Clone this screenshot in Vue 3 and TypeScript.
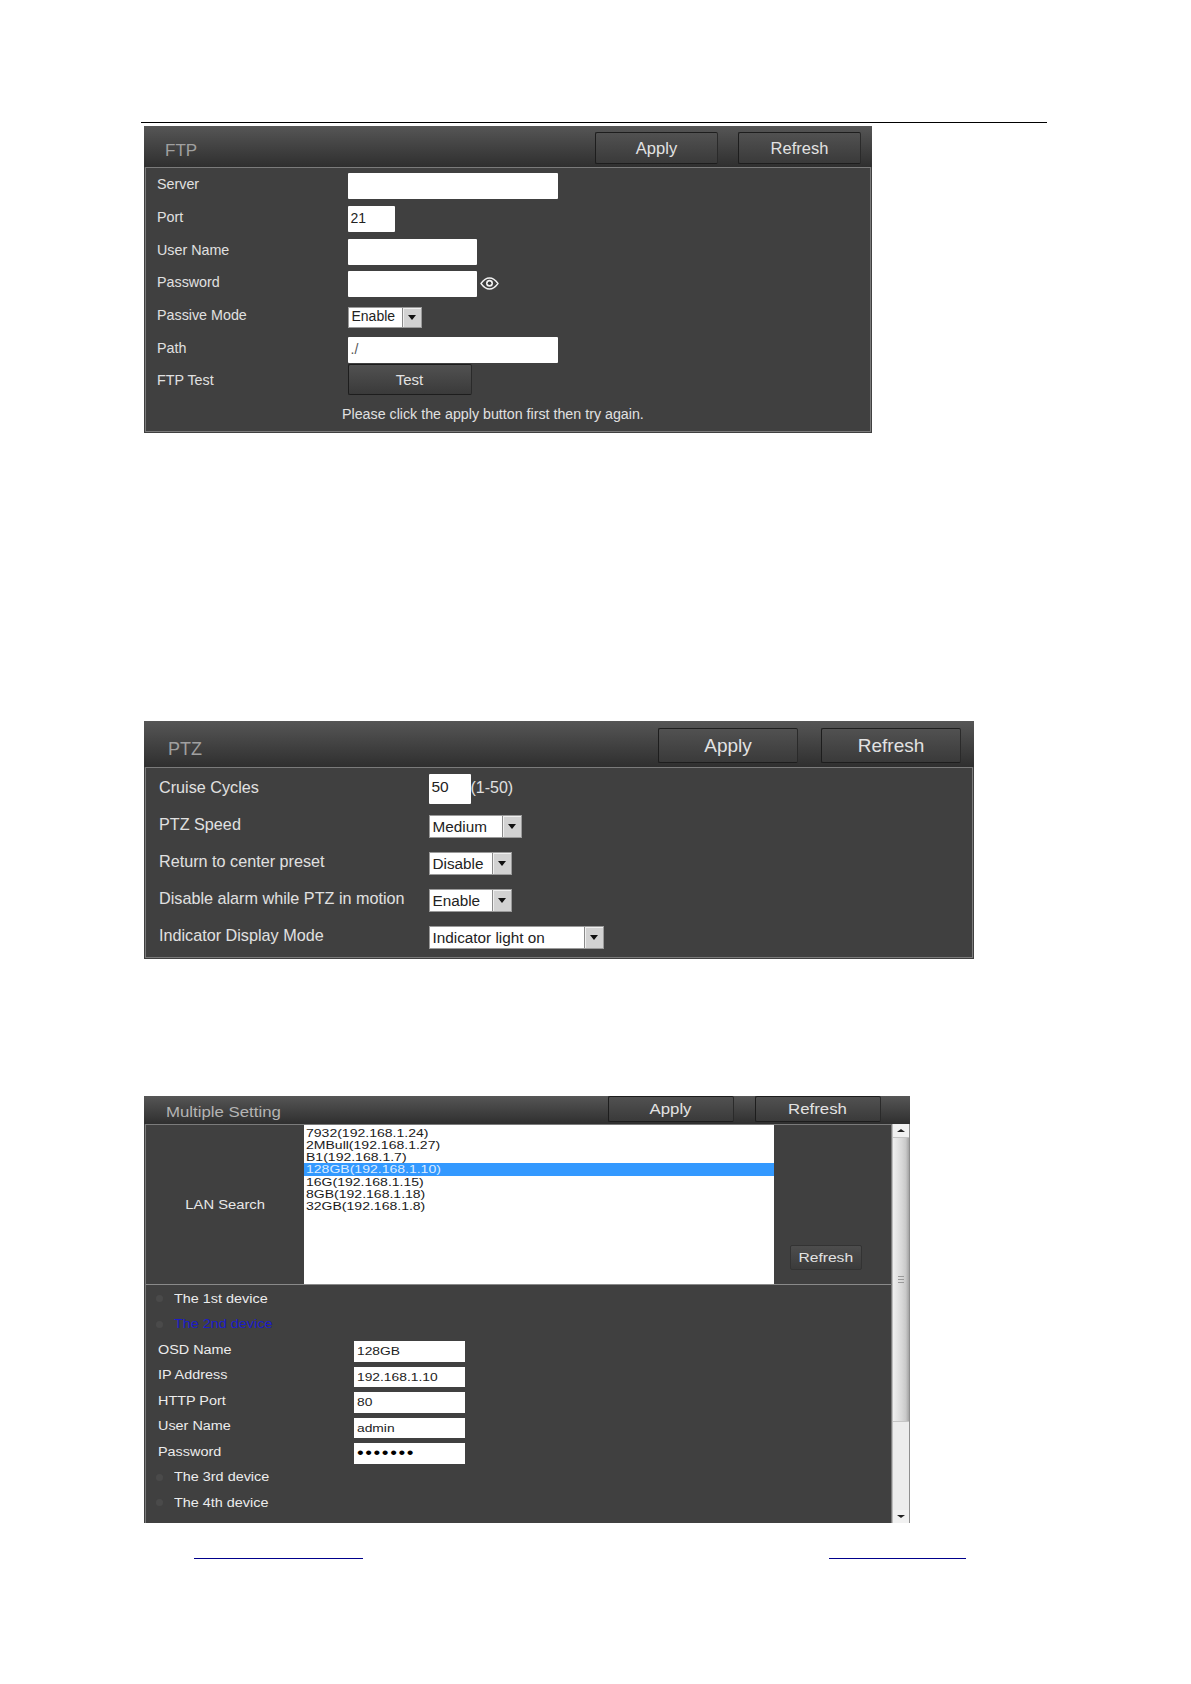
<script setup lang="ts">
const lanDevices: string[] = [
  '7932(192.168.1.24)',
  '2MBull(192.168.1.27)',
  'B1(192.168.1.7)',
  '128GB(192.168.1.10)',
  '16G(192.168.1.15)',
  '8GB(192.168.1.18)',
  '32GB(192.168.1.8)',
]
const deviceFields = [
  { label: 'OSD Name', value: '128GB' },
  { label: 'IP Address', value: '192.168.1.10' },
  { label: 'HTTP Port', value: '80' },
  { label: 'User Name', value: 'admin' },
  { label: 'Password', value: '•••••••', secret: true },
]
const ptzSelects = [
  { label: 'PTZ Speed', value: 'Medium', cls: 'w-medium' },
  { label: 'Return to center preset', value: 'Disable', cls: 'w-short' },
  { label: 'Disable alarm while PTZ in motion', value: 'Enable', cls: 'w-short' },
  { label: 'Indicator Display Mode', value: 'Indicator light on', cls: 'w-long' },
]
</script>

<template>
  <div class="page">
    <div class="rule"></div>

    <section class="panel ftp">
      <header class="head">
        <h2 class="title">FTP</h2>
        <div class="head-btns">
          <button class="btn">Apply</button>
          <button class="btn">Refresh</button>
        </div>
      </header>
      <div class="body">
        <div class="row"><span class="label">Server</span><div class="field wide"></div></div>
        <div class="row"><span class="label">Port</span><div class="field port">21</div></div>
        <div class="row"><span class="label">User Name</span><div class="field mid"></div></div>
        <div class="row">
          <span class="label">Password</span>
          <div class="field mid"></div>
          <svg class="eye" width="19" height="13" viewBox="0 0 19 13" fill="none">
            <path d="M1 6.5C4 2.3 6.6 1 9.500 1S15 2.300 18 6.500C15 10.700 12.400 12 9.500 12S4 10.700 1 6.500Z" stroke="#f2f2f2" stroke-width="1.300" />
            <circle cx="9.500" cy="6.300" r="3.500" fill="#f2f2f2" />
            <circle cx="9.500" cy="6.300" r="1.800" fill="#3a3a3a" />
          </svg>
        </div>
        <div class="row">
          <span class="label">Passive Mode</span>
          <div class="select ftp-select"><span class="sel-text">Enable</span><span class="sel-arrow"><i></i></span></div>
        </div>
        <div class="row"><span class="label">Path</span><div class="field wide path">./</div></div>
        <div class="row test-row"><span class="label">FTP Test</span><button class="btn test">Test</button></div>
        <p class="note">Please click the apply button first then try again.</p>
      </div>
    </section>

    <section class="panel ptz">
      <header class="head">
        <h2 class="title">PTZ</h2>
        <div class="head-btns">
          <button class="btn">Apply</button>
          <button class="btn">Refresh</button>
        </div>
      </header>
      <div class="body">
        <div class="row">
          <span class="label">Cruise Cycles</span>
          <div class="field cycles">50</div><span class="hint">(1-50)</span>
        </div>
        <div v-for="s in ptzSelects" :key="s.label" class="row">
          <span class="label">{{ s.label }}</span>
          <div class="select" :class="s.cls"><span class="sel-text">{{ s.value }}</span><span class="sel-arrow"><i></i></span></div>
        </div>
      </div>
    </section>

    <section class="panel multi">
      <header class="head">
        <h2 class="title"><span class="wx">Multiple Setting</span></h2>
        <div class="head-btns">
          <button class="btn"><span class="wx mid-origin">Apply</span></button>
          <button class="btn"><span class="wx mid-origin">Refresh</span></button>
        </div>
      </header>
      <div class="content">
        <div class="main">
          <div class="lan">
            <div class="lan-label"><span class="wx mid-origin">LAN Search</span></div>
            <ul class="lan-list">
              <li v-for="(d, i) in lanDevices" :key="d" :class="{ sel: i === 3 }"><span class="wx">{{ d }}</span></li>
            </ul>
            <div class="lan-side"><button class="btn small"><span class="wx mid-origin">Refresh</span></button></div>
          </div>
          <div class="devices">
            <div class="dev"><i class="dot"></i><span class="wx">The 1st device</span></div>
            <div class="dev active"><i class="dot"></i><span class="wx">The 2nd device</span></div>
            <div v-for="f in deviceFields" :key="f.label" class="dev-row">
              <span class="dev-label"><span class="wx">{{ f.label }}</span></span>
              <div class="dev-field" :class="{ secret: f.secret }"><span class="wx">{{ f.value }}</span></div>
            </div>
            <div class="dev"><i class="dot"></i><span class="wx">The 3rd device</span></div>
            <div class="dev"><i class="dot"></i><span class="wx">The 4th device</span></div>
          </div>
        </div>
        <div class="scrollbar">
          <div class="sb-btn"><i class="up"></i></div>
          <div class="sb-thumb"><span class="grip"></span></div>
          <div class="sb-track"></div>
          <div class="sb-btn"><i class="down"></i></div>
        </div>
      </div>
    </section>

    <footer class="links">
      <span class="link first"></span>
      <span class="link second"></span>
    </footer>
  </div>
</template>

<style>
body { background: #fff; }
</style>

<style scoped>
.page {
  width: 1191px;
  height: 1684px;
  padding-top: 122px;
  box-sizing: border-box;
  background: #fff;
  font-family: "Liberation Sans", Arial, sans-serif;
  overflow: hidden;
}
.rule {
  width: 906px;
  height: 1px;
  margin-left: 141px;
  background: #000;
}
.panel {
  margin-left: 144px;
  background: #404040;
  box-sizing: border-box;
}
.head {
  display: flex;
  align-items: flex-start;
  justify-content: space-between;
  box-sizing: border-box;
  background: linear-gradient(#565656, #484848 35%, #2f2f2f);
}
.title {
  margin: 0;
  font-weight: 400;
  color: #a0a0a0;
}
.head-btns { display: flex; }
.btn {
  display: block;
  padding: 0;
  box-sizing: border-box;
  font-family: inherit;
  color: #e2e2e2;
  background: linear-gradient(#515151, #3a3a3a);
  border: 1px solid #1d1d1d;
  border-right-color: #2a2a2a;
  border-radius: 2px;
}
.body {
  box-sizing: border-box;
  margin: 0 1px 1px;
  border: 1px solid #7b7b7b;
  background: #404040;
}
.row { display: flex; align-items: center; }
.label { color: #e0e0e0; }
.field {
  box-sizing: border-box;
  background: #fff;
  color: #222;
  border-radius: 1px;
}
.select {
  display: flex;
  box-sizing: border-box;
  background: #fff;
  border: 1px solid #9a9a9a;
  color: #222;
}
.sel-text { flex: 1; white-space: nowrap; }
.sel-arrow {
  display: flex;
  align-items: center;
  justify-content: center;
  width: 18px;
  background: #d2d2d2;
  border-left: 1px solid #8a8a8a;
  box-shadow: inset 1px 1px 0 #f0f0f0;
}
.sel-arrow i {
  width: 0;
  height: 0;
  border-left: 4px solid transparent;
  border-right: 4px solid transparent;
  border-top: 5px solid #111;
}

/* FTP */
.ftp { width: 728px; height: 307px; margin-top: 3px; }
.ftp .head { height: 41px; padding: 6px 11px 0 21px; }
.ftp .title { font-size: 17px; line-height: 38px; }
.ftp .head-btns { gap: 20px; }
.ftp .btn { width: 123px; height: 32px; font-size: 16.500px; }
.ftp .body { height: 265px; padding: 2px 0 0 11px; }
.ftp .row { height: 32.7px; }
.ftp .label {
  width: 190.500px;
  margin-bottom: 4px;
  font-size: 14.300px;
}
.ftp .field { height: 26px; font-size: 14px; line-height: 24px; padding-left: 3px; }
.wide { width: 210px; }
.mid { width: 129px; }
.port { width: 47px; }
.path { color: #555; }
.eye { margin: 0 0 2px 3px; }
.ftp-select { width: 74px; height: 21px; font-size: 14px; line-height: 17px; }
.ftp-select .sel-text { padding-left: 3px; }
.ftp .test-row { height: 29px; margin-top: -1px; }
.ftp .test-row .label { margin-bottom: 0; }
.ftp .btn.test { width: 124px; height: 31px; font-size: 15px; }
.note {
  margin: 4px 0 0 185px;
  font-size: 14.250px;
  line-height: 32px;
  color: #e0e0e0;
}

/* PTZ */
.ptz { width: 830px; height: 238px; margin-top: 288px; }
.ptz .head { height: 46px; padding: 7px 13px 0 24px; }
.ptz .title { font-size: 18px; line-height: 42px; }
.ptz .head-btns { gap: 23px; }
.ptz .btn { width: 140px; height: 35px; font-size: 19px; }
.ptz .body { height: 191px; padding: 2px 0 0 13px; }
.ptz .row { height: 37px; }
.ptz .label {
  width: 269.500px;
  margin-bottom: 3px;
  font-size: 16.200px;
  white-space: nowrap;
}
.cycles {
  width: 42px;
  height: 30px;
  padding-left: 3px;
  font-size: 15.500px;
  line-height: 26px;
}
.hint { margin-bottom: 1px; font-size: 16px; color: #e0e0e0; }
.ptz .select { height: 23px; font-size: 15.300px; line-height: 22px; margin-top: 1px; }
.ptz .sel-text { padding-left: 3px; }
.w-medium { width: 93px; }
.w-short { width: 83px; }
.w-long { width: 175px; }

/* Multiple setting: the text in this panel is horizontally stretched */
.wx {
  display: inline-block;
  white-space: nowrap;
  transform: scaleX(1.2);
  transform-origin: left center;
}
.wx.mid-origin { transform-origin: center; }
.multi { width: 766px; height: 427px; margin-top: 137px; }
.multi .head { height: 28px; padding: 0 29px 0 22px; }
.multi .title { font-size: 14px; line-height: 32px; color: #b4b4b4; }
.multi .head-btns { gap: 21px; }
.multi .btn {
  width: 126px;
  height: 26px;
  font-size: 14px;
}
.content { display: flex; height: 399px; }
.main {
  width: 747px;
  box-sizing: border-box;
  border-left: 1px solid #7b7b7b;
  margin-left: 1px;
  border-right: 1px solid #7b7b7b;
  border-top: 1px solid #7b7b7b;
}
.lan {
  display: flex;
  height: 159px;
  border-bottom: 1px solid #8a8a8a;
}
.lan-label {
  width: 158px;
  box-sizing: border-box;
  padding-top: 72px;
  text-align: center;
  font-size: 12.300px;
  line-height: 16px;
  color: #e8e8e8;
}
.lan-list {
  width: 470px;
  margin: 0;
  padding: 1.500px 0 0;
  list-style: none;
  background: #fff;
  color: #1a1a1a;
  font-size: 11.700px;
  line-height: 12.200px;
}
.lan-list li { height: 12.200px; padding-left: 2px; white-space: nowrap; }
.lan-list li.sel {
  background: #3399ff;
  color: #dcecff;
  height: 12.900px;
}
.lan-side {
  flex: 1;
  display: flex;
  align-items: flex-end;
  padding: 0 0 14px 16px;
}
.multi .btn.small {
  width: 72px;
  height: 25px;
  font-size: 13px;
  border-color: #333;
  background: linear-gradient(#4d4d4d, #3b3b3b);
}
.devices { padding-top: 1px; }
.dev, .dev-row {
  display: flex;
  align-items: center;
  height: 25.500px;
  font-size: 12px;
  color: #ececec;
}
.dev { padding-left: 10px; }
.dev.active { color: #1c1cc8; }
.dot {
  width: 7px;
  height: 7px;
  margin-right: 11px;
  border-radius: 50%;
  background: #4a4a4a;
}
.dev-row { padding-left: 12px; }
.dev-label { width: 196px; }
.dev-field {
  width: 111px;
  height: 20.500px;
  margin-top: 3px;
  box-sizing: border-box;
  padding-left: 3px;
  background: #fff;
  color: #222;
  font-size: 11.500px;
  line-height: 20px;
}
.dev-field.secret { color: #000; font-size: 16px; letter-spacing: 1.300px; }
.scrollbar {
  flex: 1;
  display: flex;
  flex-direction: column;
  background: #ececec;
  border-left: 1px solid #bdbdbd;
  border-right: 1px solid #8f8f8f;
}
.sb-btn {
  display: flex;
  align-items: center;
  justify-content: center;
  height: 13px;
  background: #f1f1f1;
}
.sb-btn i { width: 0; height: 0; border-left: 4px solid transparent; border-right: 4px solid transparent; }
.sb-btn .up { border-bottom: 3px solid #222; }
.sb-btn .down { border-top: 3px solid #222; }
.sb-thumb {
  display: flex;
  align-items: center;
  justify-content: center;
  height: 285px;
  background: linear-gradient(90deg, #efefef, #d8d8d8 55%, #c9c9c9 80%, #a4a4a4);
  border-top: 1px solid #c4c4c4;
  border-bottom: 1px solid #c4c4c4;
  box-sizing: border-box;
}
.grip {
  width: 6px;
  height: 5px;
  border-top: 1px solid #999;
  border-bottom: 1px solid #999;
  background: linear-gradient(#999, #999) center / 100% 1px no-repeat;
}
.sb-track { flex: 1; }

.links { display: flex; margin-top: 35px; }
.link { display: block; height: 1px; background: #00008c; }
.first { width: 169px; margin-left: 194px; }
.second { width: 137px; margin-left: 466px; }
</style>
